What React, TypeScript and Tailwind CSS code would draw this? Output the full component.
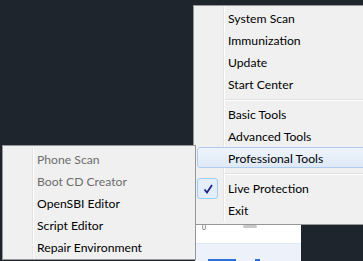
import React from "react";

type Item = { label: string; disabled?: boolean; checked?: boolean; active?: boolean } | "sep";

const mainItems: Item[] = [
  { label: "System Scan" },
  { label: "Immunization" },
  { label: "Update" },
  { label: "Start Center" },
  "sep",
  { label: "Basic Tools" },
  { label: "Advanced Tools" },
  { label: "Professional Tools", active: true },
  "sep",
  { label: "Live Protection", checked: true },
  { label: "Exit" },
];

const subItems: Item[] = [
  { label: "Phone Scan", disabled: true },
  { label: "Boot CD Creator", disabled: true },
  { label: "OpenSBI Editor" },
  { label: "Script Editor" },
  { label: "Repair Environment" },
];

function Check() {
  return (
    <div className="absolute left-0 top-[1px] w-[21px] h-[21px] rounded-[3px] border border-[#9ccdf3] bg-[#e4eefa] flex items-center justify-center">
      <svg width="12" height="12" viewBox="0 0 12 12">
        <path d="M2.5 6.5 L5 9.5 L10 2" fill="none" stroke="#1a2486" strokeWidth="1.8" />
      </svg>
    </div>
  );
}

function MenuRows({ items }: { items: Item[] }) {
  return (
    <div className="relative flex flex-col">
      {/* gutter */}
      <div className="absolute left-[26px] top-0 bottom-0 w-[2px] border-l border-[#e2e3e3] border-r border-r-white" />
      {items.map((it, i) =>
        it === "sep" ? (
          <div key={i} className="h-[8px] flex flex-col pl-[28px] pt-[4px]">
            <div className="h-px bg-[#e0e0e0]" />
            <div className="h-px bg-white" />
          </div>
        ) : (
          <div key={i} className="relative h-[22px] flex items-center pt-[2px]">
            {it.active && (
              <div className="absolute left-0 right-0 top-0 h-[21px] rounded-[3px] border border-[#aeccf0] bg-gradient-to-b from-[#eef4fc] to-[#dfe9f7]" />
            )}
            {it.checked && <Check />}
            <span
              className={
                "relative pl-[31px] text-[12.2px] leading-none whitespace-nowrap " +
                (it.disabled ? "text-[#6d6d6d]" : "text-black")
              }
            >
              {it.label}
            </span>
          </div>
        )
      )}
    </div>
  );
}

export default function App() {
  return (
    <div
      className="relative w-[363px] h-[261px] overflow-hidden bg-[#1e252d]"
      style={{ fontFamily: 'Lato, "Noto Sans", sans-serif' }}
    >
      {/* background window peeking below the menu */}
      <div className="absolute left-[195px] top-[224px] w-[106px] h-[40px] bg-white flex flex-col">
        <div className="h-[19px] relative">
          <span className="absolute left-[7px] top-[-2px] text-[7px] text-[#555]">0</span>
          <div className="absolute left-[48px] top-[1px] w-[14px] h-[3px] rounded bg-[#c8c8c8]" />
        </div>
        <div className="flex-1 bg-[#edf2fa] relative border-t border-[#dfe7f3]">
          <div className="absolute left-[13px] top-[15px] w-[28px] h-[2px] bg-[#2d6fd6]" />
          <div className="absolute left-[60px] top-[15px] w-[5px] h-[2px] bg-[#2d6fd6]" />
        </div>
      </div>

      {/* main context menu */}
      <div className="absolute left-[193px] top-[5px] w-[180px] h-[220px] bg-[#f0f0f0] border border-[#979797] pt-[1px] pl-[3px]">
        <MenuRows items={mainItems} />
      </div>

      {/* professional tools submenu */}
      <div className="absolute left-[2px] top-[145px] w-[194px] h-[115px] bg-[#f0f0f0] border border-[#979797] pt-[2px] pl-[3px] pr-[2px]">
        <MenuRows items={subItems} />
      </div>
    </div>
  );
}
